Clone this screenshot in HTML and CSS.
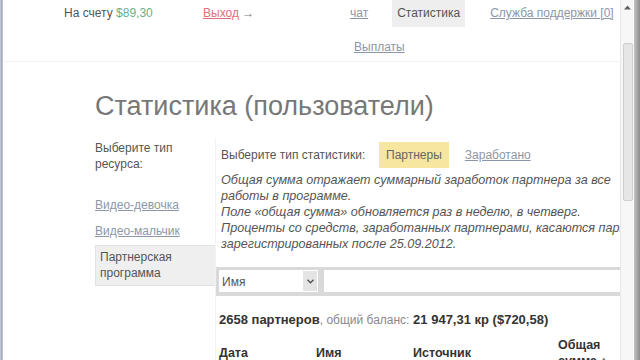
FILE: index.html
```html
<!DOCTYPE html>
<html lang="ru">
<head>
<meta charset="utf-8">
<title>Статистика (пользователи)</title>
<link rel="stylesheet" href="styles.css">
</head>
<body>
<div class="frame">
  <div class="edge-left"></div>
  <div class="page">
    <header class="top">
      <div class="account">
        <span class="balance">На счету <span class="money">$89,30</span></span>
        <span class="logout"><a href="#" class="exit">Выход</a> →</span>
      </div>
      <nav class="nav">
        <a href="#" class="nav-item link">чат</a>
        <span class="nav-item active">Статистика</span>
        <a href="#" class="nav-item link support">Служба поддержки [0]</a>
        <a href="#" class="nav-item link payouts">Выплаты</a>
      </nav>
    </header>
    <main class="main">
      <h1 class="title">Статистика (пользователи)</h1>
      <div class="cols">
        <aside class="side">
          <p class="side-label">Выберите тип ресурса:</p>
          <a href="#" class="side-link first">Видео-девочка</a>
          <a href="#" class="side-link">Видео-мальчик</a>
          <div class="side-active">Партнерская программа</div>
        </aside>
        <section class="panel">
          <div class="stat-type">
            <span class="stat-label">Выберите тип статистики:</span>
            <span class="pill">Партнеры</span>
            <a href="#" class="link earned">Заработано</a>
          </div>
          <p class="note">Общая сумма отражает суммарный заработок партнера за все<br>работы в программе.<br>Поле «общая сумма» обновляется раз в неделю, в четверг.<br>Проценты со средств, заработанных партнерами, касаются партнеров,<br>зарегистрированных после 25.09.2012.</p>
          <div class="filter">
            <div class="select"><span class="select-text">Имя</span><span class="select-btn"><svg width="7" height="5" viewBox="0 0 7 5"><path d="M0.5 0.8 L3.5 3.8 L6.5 0.8" fill="none" stroke="#555" stroke-width="1.4"/></svg></span></div>
            <div class="input"></div>
          </div>
          <p class="summary"><b>2658 партнеров</b><span class="muted">, общий баланс:</span> <b>21 947,31 кр ($720,58)</b></p>
          <div class="thead">
            <div class="th th-date">Дата</div>
            <div class="th th-name">Имя</div>
            <div class="th th-src">Источник</div>
            <div class="th th-sum">Общая<br>сумма ↑</div>
          </div>
        </section>
      </div>
    </main>
  </div>
  <div class="scrollbar">
    <div class="sb-arrow"><svg width="7" height="5" viewBox="0 0 7 5"><path d="M0 4.5 L3.5 0.5 L7 4.5 Z" fill="#606060"/></svg></div>
    <div class="sb-thumb"></div>
  </div>
  <div class="edge-right"></div>
</div>
</body>
</html>
```

FILE: styles.css
```css
* { box-sizing: border-box; }
html, body { margin: 0; padding: 0; }
body {
  width: 640px;
  height: 360px;
  overflow: hidden;
  background: #fff;
  font-family: "Liberation Sans", Arial, sans-serif;
  font-size: 12px;
  color: #555;
}
a { text-decoration: underline; }
.frame { display: flex; height: 360px; }
.edge-left { width: 3px; background: linear-gradient(to right, #d8dce6, #9ea6b6 40%, #c8ccd6); flex: none; }
.page { width: 617px; flex: none; overflow: hidden; }
.scrollbar {
  width: 14px; flex: none; background: #f7f7f7;
  border-left: 1px solid #e8e8e8;
  display: flex; flex-direction: column; align-items: center;
}
.sb-arrow { height: 14px; display: flex; align-items: center; justify-content: center; }
.sb-thumb { margin-top: 29px; width: 10px; height: 158px; background: #e6e6e6; border: 1px solid #cfcfcf; border-radius: 2px; }
.edge-right { width: 6px; flex: none; background: linear-gradient(to right, #c4c4c4, #8c8c8c); }

.top { display: flex; height: 62px; border-bottom: 1px solid #f2f2f2; }
.account { display: flex; padding: 6px 0 0 61px; width: 342px; flex: none; }
.balance { width: 139px; }
.money { color: #66b08c; }
.exit { color: #e0707e; }
.logout { color: #777; }
.nav { display: flex; flex-wrap: wrap; align-content: flex-start; width: 275px; }
.nav-item { padding: 6px 5px 6px; line-height: 14px; }
.link { color: #8c96a8; }
.active { background: #eeeeee; color: #555; margin-left: 19px; padding: 6px 5px 7px; }
.support { margin-left: 20px; padding-right: 0; }
.payouts { margin-left: 4px; margin-top: 7px; }

.main { padding-left: 92px; }
.title { margin: 28px 0 0; font-size: 27px; font-weight: normal; color: #777; line-height: 32px; }
.cols { display: flex; margin-top: 16px; }
.side { width: 120px; flex: none; display: flex; flex-direction: column; }
.side-label { margin: 0; line-height: 16px; padding-top: 2px; }
.side-link { color: #8c96a8; line-height: 16px; margin-top: 10px; }
.side-link.first { margin-top: 25px; }
.side-active {
  margin-top: 6px; background: #efefef; border: 1px solid #e2e2e2; border-right: none;
  padding: 3px 4px 4px; line-height: 16px; color: #555;
}
.panel { width: 460px; flex: none; border-left: 1px solid #f2f2f2; }
.stat-type { display: flex; align-items: center; padding: 4px 0 0 5px; }
.stat-label { width: 158px; }
.pill { background: #f7e6a0; padding: 6px 7px; color: #666; }
.earned { margin-left: 16px; }
.note { margin: 4px 0 0; padding-left: 5px; font-style: italic; line-height: 16px; white-space: nowrap; color: #555; font-size: 12.6px; }
.filter { margin-top: 15px; background: #d9d9d9; padding: 3px 0 4px 3px; display: flex; gap: 6px; }
.select { width: 99px; height: 22px; background: #fff; display: flex; align-items: stretch; }
.select-text { flex: 1; padding: 5px 0 0 3px; color: #555; }
.select-btn { width: 14px; background: #e4e4e4; display: flex; align-items: center; justify-content: center; margin: 1px 1px 1px 0; }
.input { flex: 1; height: 22px; background: #fff; }
.summary { margin: 16px 0 0; padding-left: 3px; color: #333; font-size: 13px; }
.muted { color: #888; font-size: 12px; }
.thead { display: flex; align-items: center; margin-top: 10px; padding-left: 3px; font-weight: bold; color: #333; font-size: 12.5px; }
.th { line-height: 16px; }
.th-date { width: 97px; }
.th-name { width: 97px; }
.th-src { width: 145px; }
.th-sum { width: 60px; }
```
